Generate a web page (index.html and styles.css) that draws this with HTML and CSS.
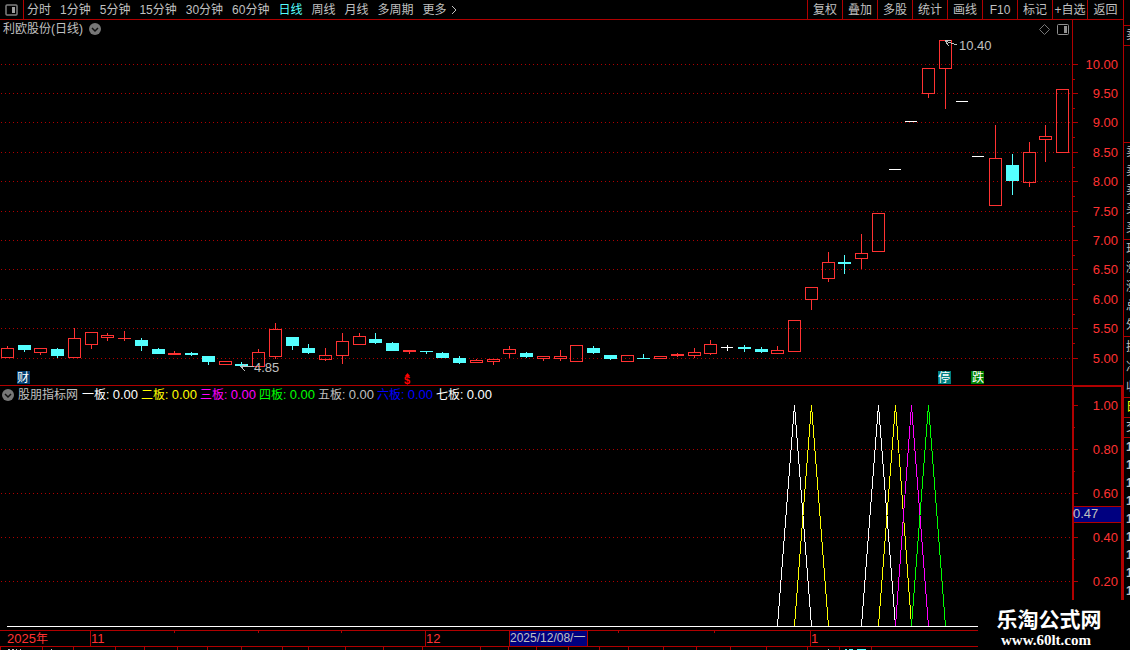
FILE: index.html
```html
<!DOCTYPE html>
<html lang="zh-CN">
  <head>
    <meta charset="utf-8">
    <title>利欧股份(日线)</title>
    <link rel="stylesheet" href="styles.css">
  </head>
  <body>
    <div class="main">
      <div class="toolbar">
        <button class="layout-button" aria-label="布局">
          <svg width="13" height="12" viewBox="0 0 13 12">
            <rect x="1" y="1" width="11" height="10" rx="1" fill="none" stroke="#808080" stroke-width="1.5" />
            <rect x="7" y="3" width="3" height="6" fill="#a0a0a0" />
          </svg>
        </button>
        <div class="periods">
          <button>分时</button>
          <button>1分钟</button>
          <button>5分钟</button>
          <button>15分钟</button>
          <button>30分钟</button>
          <button>60分钟</button>
          <button class="active">日线</button>
          <button>周线</button>
          <button>月线</button>
          <button>多周期</button>
          <button class="more">更多
            <svg width="6" height="10" viewBox="0 0 6 10"><path d="M1 1L5 5L1 9" fill="none" stroke="#c0c0c0" /></svg>
          </button>
        </div>
        <div class="tools">
          <button>复权</button>
          <button>叠加</button>
          <button>多股</button>
          <button>统计</button>
          <button>画线</button>
          <button>F10</button>
          <button>标记</button>
          <button>+自选</button>
          <button>返回</button>
        </div>
      </div>

      <div class="panel">
        <div class="panel-header">
          <span>利欧股份(日线)</span>
          <button class="round" aria-label="展开">
            <svg width="12" height="12" viewBox="0 0 12 12"><circle cx="6" cy="6" r="6" fill="#777" /><path d="M3 5L6 8L9 5" fill="none" stroke="#111" stroke-width="1.5" /></svg>
          </button>
          <div class="corner">
            <svg width="11" height="11" viewBox="0 0 11 11"><path d="M5.5 .5L10.5 5.5L5.5 10.5L.5 5.5Z" fill="none" stroke="#777" /></svg>
            <svg width="12" height="11" viewBox="0 0 12 11"><rect x=".5" y=".5" width="11" height="10" rx="1" fill="none" stroke="#909090" /><rect x="7" y="2" width="3" height="7" fill="#909090" /></svg>
          </div>
        </div>
        <svg class="chart" id="price" viewBox="0 20 1123 366">
          <g class="grid" id="price-grid"></g>
          <g id="candles"></g>
          <g class="axis">
            <path d="M1072.5 20V386M0 385.5H1123" />
            <g id="price-ticks"></g>
          </g>
          <path class="pointer" d="M957 45L945 41M951 40L945 41L949 46" />
          <text class="mark" x="959" y="50">10.40</text>
          <path class="pointer" d="M254 366.5H241M246 364L241 366.5L245 371" />
          <text class="mark" x="254" y="372">4.85</text>
          <rect x="17" y="371" width="13" height="13" fill="#003c70" />
          <text class="badge" x="17" y="382">财</text>
          <rect x="938" y="371" width="13" height="13" fill="#008080" />
          <text class="badge" x="938" y="382">停</text>
          <rect x="971" y="371" width="13" height="13" fill="#008000" />
          <text class="badge" x="972" y="382">跌</text>
          <path d="M405 376L407.5 373L410 376Z" fill="#f00" />
          <text class="dividend" x="404" y="384">$</text>
        </svg>
      </div>

      <div class="panel">
        <div class="panel-header legend">
          <button class="round" aria-label="展开">
            <svg width="12" height="12" viewBox="0 0 12 12"><circle cx="6" cy="6" r="6" fill="#777" /><path d="M3 5L6 8L9 5" fill="none" stroke="#111" stroke-width="1.5" /></svg>
          </button>
          <span class="name">股朋指标网</span>
          <span class="item white">一板: <b>0.00</b></span>
          <span class="item yellow">二板: <b>0.00</b></span>
          <span class="item magenta">三板: <b>0.00</b></span>
          <span class="item green">四板: <b>0.00</b></span>
          <span class="item gray">五板: <b>0.00</b></span>
          <span class="item blue">六板: <b>0.00</b></span>
          <span class="item white">七板: <b>0.00</b></span>
        </div>
        <svg class="chart" viewBox="0 386 1123 244">
          <g class="grid" id="signal-grid"></g>
          <g class="signals" id="signals"></g>
          <path d="M7 626.5H1072" stroke="#fff" shape-rendering="crispEdges" />
          <g class="axis">
            <path class="frame" d="M1073 630V386H1122V630" />
            <g id="signal-ticks"></g>
          </g>
          <rect x="1074" y="507" width="47" height="15" fill="#000080" />
          <path class="cursor-line" d="M1074 506.5H1121M1074 522.5H1121" />
          <text class="mark" x="1073" y="518">0.47</text>
        </svg>
      </div>

      <svg class="chart" viewBox="0 630 1123 20">
        <rect x="510" y="631" width="77" height="15" fill="#000080" />
        <g class="axis">
          <path d="M0 630.5H1123M0 646.5H1123" />
          <path d="M90.5 630V646M425.5 630V646M509.5 630V646M587.5 630V646M810.5 630V646" />
          <path d="M174.5 630V633M258.5 630V633M341.5 630V633M618.5 630V633M714.5 630V633" />
          <path id="tab-ticks" />
          <text x="7" y="643">2025<tspan class="cjk">年</tspan></text>
          <text x="91" y="643">11</text>
          <text x="426" y="643">12</text>
          <text x="811" y="643">1</text>
        </g>
        <text class="mark date" x="510" y="642">2025/12/08/一</text>
        <path d="M8 649.5H10M12 649.5H14M16 649.5H17M20 649.5H21M51 649.5H52M828 649.5H829" stroke="#c0c0c0" />
        <path d="M845 649.5H847M849 649.5H853M857 649.5H866" stroke="#54ffff" />
      </svg>
    </div>

    <div class="side">
      <div class="group first">卖</div>
      <div class="group gap"></div>
      <div class="group book">卖<br>卖<br>卖<br>买<br>买</div>
      <div class="group book">现<br>涨<br>涨<br>总<br>外</div>
      <div class="group stats">换<br>净<br>收</div>
      <div class="group head yellow">日</div>
      <div class="group head">交</div>
      <div class="group trades">1<br>1<br>1<br>1<br>1<br>1<br>1<br>1<br>1</div>
    </div>

    <div class="brand">
      <strong>乐淘公式网</strong>
      <span>www.60lt.com</span>
    </div>

    <script src="chart.js"></script>
  </body>
</html>
```
FILE: styles.css
```css
body {
  margin: 0;
  display: flex;
  align-items: flex-start;
  position: relative;
  overflow: hidden;
  background: #000;
  color: #c0c0c0;
  font: 12px/18px "Liberation Sans", "Noto Sans CJK SC", sans-serif;
}

button {
  padding: 0;
  border: 0;
  background: none;
  color: inherit;
  font: inherit;
  white-space: nowrap;
  cursor: pointer;
}

svg {
  display: block;
}

.main {
  flex: 1;
  min-width: 0;
}

/* Toolbar */
.toolbar {
  display: flex;
  height: 19px;
  border-bottom: 1px solid #b00000;
}

.layout-button {
  width: 24px;
  padding: 0 5px;
  border-right: 1px solid #b00000;
}

.periods {
  display: flex;
  flex: 1;
  gap: 9px;
  padding-left: 3px;
}

.periods .active {
  color: #54ffff;
}

.more {
  display: flex;
  align-items: center;
  gap: 4px;
}

.tools {
  display: grid;
  grid-template-columns: repeat(8, 35px) 36px;
}

.tools button {
  border-left: 1px solid #b00000;
}

/* Chart panels */
.panel {
  position: relative;
}

.panel-header {
  position: absolute;
  top: 0;
  left: 3px;
  right: 54px;
  display: flex;
  align-items: center;
  gap: 6px;
}

.corner {
  display: flex;
  gap: 7px;
  margin-left: auto;
}

.legend {
  left: 2px;
  gap: 4px;
}

.legend .item {
  width: 55px;
  white-space: nowrap;
}

.legend b {
  font-size: 13px;
  font-weight: normal;
}

.white { color: #fff; }
.yellow { color: #ff0; }
.magenta { color: #f0f; }
.green { color: #0f0; }
.gray { color: #c0c0c0; }
.blue { color: #00f; }

.chart {
  width: 100%;
  height: auto;
}

.chart text {
  font-size: 13px;
}

.grid path {
  stroke: #b00000;
  stroke-dasharray: 1 3;
  shape-rendering: crispEdges;
}

.axis path,
.cursor-line {
  fill: none;
  stroke: #b00000;
  shape-rendering: crispEdges;
}

.axis .frame {
  stroke-width: 2px;
}

.axis text {
  fill: #ff3232;
}

.axis .value {
  text-anchor: end;
}

.chart .cjk,
.chart .badge,
.chart .date {
  font-size: 12px;
}

.mark {
  fill: #c0c0c0;
}

.pointer {
  fill: none;
  stroke: #c0c0c0;
  shape-rendering: crispEdges;
}

.badge {
  fill: #fff;
}

.chart .dividend {
  fill: #f00;
  font-size: 11px;
  font-weight: bold;
}

#candles,
.signals {
  shape-rendering: crispEdges;
}

.signals path {
  fill: none;
}

/* Quote column, mostly cut off by the window edge */
.side {
  width: 6px;
  height: 650px;
  overflow: hidden;
  border-left: 1px solid #b00000;
}

.group {
  padding-left: 2px;
  border-bottom: 1px solid #b00000;
}

.first {
  margin-top: 25px;
  border-top: 1px solid #b00000;
  line-height: 19px;
}

.gap {
  height: 96px;
}

.book {
  line-height: 19px;
  height: 96px;
}

.stats {
  line-height: 20px;
}

.head {
  line-height: 19px;
}

.trades {
  border: 0;
  font-weight: bold;
}

/* Site mark */
.brand {
  position: absolute;
  right: 0;
  bottom: 0;
  width: 142px;
  height: 43px;
  padding: 7px 10px 0 0;
  background: #000;
  color: #fff;
}

.brand strong,
.brand span {
  display: block;
  text-align: center;
}

.brand strong {
  font-size: 21px;
  line-height: 25px;
}

.brand span {
  padding-right: 6px;
  font: bold 15px/16px "Liberation Serif", serif;
}
```
FILE: chart.js
```js
const RED = "#ff3232";
const CYAN = "#54ffff";
const WHITE = "#ffffff";

// colour, wick top, body top, body bottom, wick bottom
const candles = [
  [RED, 346, 348, 357, 357], [CYAN, 345, 345, 349, 351], [RED, 348, 348, 352, 354],
  [CYAN, 348, 349, 355, 357], [RED, 328, 338, 357, 357], [RED, 332, 332, 344, 348],
  [RED, 333, 335, 337, 340], [RED, 331, 338, 338, 340], [CYAN, 338, 340, 345, 350],
  [CYAN, 348, 349, 353, 353], [RED, 351, 353, 354, 354], [CYAN, 352, 353, 354, 355],
  [CYAN, 356, 356, 361, 364], [RED, 361, 361, 364, 364], [CYAN, 362, 364, 365, 367],
  [RED, 349, 352, 366, 366], [RED, 323, 329, 356, 358], [CYAN, 337, 337, 345, 349],
  [CYAN, 344, 348, 352, 353], [RED, 348, 355, 359, 360], [RED, 333, 341, 355, 363],
  [RED, 333, 336, 344, 344], [CYAN, 333, 339, 342, 343], [CYAN, 342, 343, 350, 350],
  [RED, 350, 350, 351, 353], [CYAN, 351, 351, 351, 353], [CYAN, 352, 353, 357, 357],
  [CYAN, 356, 358, 362, 363], [RED, 359, 360, 362, 362], [RED, 359, 359, 361, 364],
  [RED, 346, 349, 353, 357], [CYAN, 352, 353, 356, 357], [RED, 356, 356, 358, 360],
  [RED, 350, 356, 358, 360], [RED, 345, 345, 361, 361], [CYAN, 346, 348, 352, 353],
  [CYAN, 355, 355, 358, 359], [RED, 355, 355, 361, 361], [CYAN, 354, 358, 358, 358],
  [RED, 356, 356, 358, 358], [RED, 353, 354, 355, 356], [RED, 348, 352, 355, 357],
  [RED, 340, 344, 353, 354], [WHITE, 345, 347, 347, 350], [CYAN, 345, 347, 348, 351],
  [CYAN, 347, 349, 351, 352], [RED, 346, 350, 353, 353], [RED, 320, 320, 351, 351],
  [RED, 287, 287, 299, 309], [RED, 252, 262, 278, 281], [CYAN, 255, 262, 263, 273],
  [RED, 234, 253, 258, 268], [RED, 213, 213, 251, 251], [WHITE, 169, 169, 169, 169],
  [WHITE, 121, 121, 121, 121], [RED, 68, 68, 93, 97], [RED, 40, 40, 68, 108],
  [WHITE, 101, 101, 101, 101], [WHITE, 156, 156, 156, 156], [RED, 125, 158, 205, 205],
  [CYAN, 154, 165, 180, 194], [RED, 142, 152, 182, 186], [RED, 125, 136, 139, 161],
  [RED, 89, 89, 152, 152]
];

// day index of each peak
const signals = [
  [47, "#ffffff"], [48, "#ffff00"], [52, "#ffffff"],
  [53, "#ffff00"], [54, "#ff00ff"], [55, "#00ff00"]
];

const priceRows = [64, 93, 122, 152, 181, 211, 240, 269, 299, 328, 358];
const signalRows = [405, 449, 493, 537, 581];
const tabs = [0, 42, 73, 115, 144, 177, 207, 241, 282, 308, 345, 383, 422, 480, 508, 536, 568, 599, 628, 663, 696, 730, 766, 807, 839, 871];

function dayX(i) {
  return Math.floor(7.4 + 16.75 * i);
}

function add(id, name, attrs, text) {
  const el = document.createElementNS("http://www.w3.org/2000/svg", name);
  for (const key in attrs) el.setAttribute(key, attrs[key]);
  if (text) el.textContent = text;
  document.getElementById(id).appendChild(el);
}

candles.forEach(([color, high, top, bottom, low], i) => {
  const x = dayX(i);
  const height = bottom - top + 1;
  if (color === RED && height > 2) {
    add("candles", "rect", { x: x - 5.5, y: top + 0.5, width: 12, height: height - 1, fill: "none", stroke: color });
  } else {
    add("candles", "rect", { x: x - 6, y: top, width: color === WHITE ? 12 : 13, height: height, fill: color });
  }
  if (high < top) add("candles", "rect", { x: x, y: high, width: 1, height: top - high, fill: color });
  if (low > bottom) add("candles", "rect", { x: x, y: bottom + 1, width: 1, height: low - bottom, fill: color });
});

signals.forEach(([day, color]) => {
  const d = `M${dayX(day - 1) + 0.5} 626L${dayX(day) + 0.5} 405L${dayX(day + 1) + 0.5} 626`;
  add("signals", "path", { d: d, stroke: color });
});

priceRows.forEach((y, i) => {
  add("price-grid", "path", { d: `M1 ${y + 0.5}H1072` });
  add("price-ticks", "path", { d: `M1073 ${y + 0.5}H1078` });
  if (i < 10) add("price-ticks", "path", { d: `M1073 ${y + 15.5}H1075` });
  add("price-ticks", "text", { class: "value", x: 1118, y: y + 5 }, (10 - i * 0.5).toFixed(2));
});

signalRows.forEach((y, i) => {
  if (i > 0) add("signal-grid", "path", { d: `M1 ${y + 0.5}H1072` });
  add("signal-ticks", "path", { d: `M1074 ${y + 0.5}H1078` });
  add("signal-ticks", "path", { d: `M1074 ${y + 22.5}H1075` });
  add("signal-ticks", "text", { class: "value", x: 1118, y: y + 5 }, (1 - i * 0.2).toFixed(2));
});

document.getElementById("tab-ticks").setAttribute("d", tabs.map(x => `M${x + 0.5} 647V650`).join(""));
```
